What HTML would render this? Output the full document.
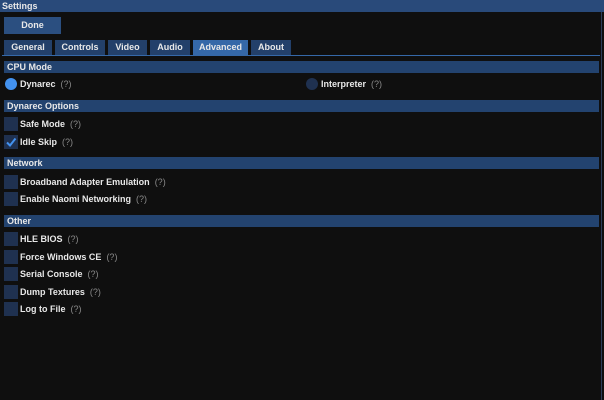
<!DOCTYPE html>
<html><head><style>
*{margin:0;padding:0;box-sizing:border-box}
body{width:604px;height:400px;background:#0f0f0f;font-family:"Liberation Sans",sans-serif;font-size:9px;color:#e8e8e8;position:relative;overflow:hidden;font-weight:bold}
.a{position:absolute}
.title{left:0;top:0;width:604px;height:12px;background:#294a7a;padding-left:2px;line-height:12px}
.btn{background:#2b4f80;text-align:center;line-height:16px}
.tab{top:40px;height:15px;background:#23406a;text-align:center;line-height:15px}
.hdr{left:4px;width:595px;height:12px;background:#23436f;line-height:12px;padding-left:3px}
.cb{left:4px;width:14px;height:14px;background:#1f3150}
.lbl{left:20px;line-height:14px}
.q{color:#8a8a8a;font-weight:normal;margin-left:5px}
</style></head><body>
<div class="a title">Settings</div>
<div class="a" style="left:601px;top:12px;width:1px;height:388px;background:#2c3e5a"></div>
<div class="a btn" style="left:4px;top:17px;width:57px;height:17px">Done</div>
<div class="a tab" style="left:4px;width:48px">General</div>
<div class="a tab" style="left:55px;width:50px">Controls</div>
<div class="a tab" style="left:108px;width:39px">Video</div>
<div class="a tab" style="left:150px;width:40px">Audio</div>
<div class="a tab" style="left:193px;width:55px;background:#3568a8">Advanced</div>
<div class="a tab" style="left:251px;width:40px">About</div>
<div class="a" style="left:2px;top:55px;width:598px;height:1px;background:#3568a8"></div>

<div class="a hdr" style="top:61px">CPU Mode</div>
<div class="a" style="left:5px;top:78px;width:12px;height:12px;border-radius:50%;background:#4392ef"></div>
<div class="a lbl" style="top:77px">Dynarec<span class="q">(?)</span></div>
<div class="a" style="left:306px;top:78px;width:12px;height:12px;border-radius:50%;background:#1f3150"></div>
<div class="a lbl" style="left:321px;top:77px">Interpreter<span class="q">(?)</span></div>

<div class="a hdr" style="top:100px">Dynarec Options</div>
<div class="a cb" style="top:117px"></div><div class="a lbl" style="top:117px">Safe Mode<span class="q">(?)</span></div>
<div class="a cb" style="top:135px"><svg width="14" height="14"><path d="M3 7.5 L6 10.5 L11.5 3.5" stroke="#4392ef" stroke-width="2" fill="none"/></svg></div><div class="a lbl" style="top:135px">Idle Skip<span class="q">(?)</span></div>

<div class="a hdr" style="top:157px">Network</div>
<div class="a cb" style="top:175px"></div><div class="a lbl" style="top:175px">Broadband Adapter Emulation<span class="q">(?)</span></div>
<div class="a cb" style="top:192px"></div><div class="a lbl" style="top:192px">Enable Naomi Networking<span class="q">(?)</span></div>

<div class="a hdr" style="top:215px">Other</div>
<div class="a cb" style="top:232px"></div><div class="a lbl" style="top:232px">HLE BIOS<span class="q">(?)</span></div>
<div class="a cb" style="top:250px"></div><div class="a lbl" style="top:250px">Force Windows CE<span class="q">(?)</span></div>
<div class="a cb" style="top:267px"></div><div class="a lbl" style="top:267px">Serial Console<span class="q">(?)</span></div>
<div class="a cb" style="top:285px"></div><div class="a lbl" style="top:285px">Dump Textures<span class="q">(?)</span></div>
<div class="a cb" style="top:302px"></div><div class="a lbl" style="top:302px">Log to File<span class="q">(?)</span></div>
</body></html>
